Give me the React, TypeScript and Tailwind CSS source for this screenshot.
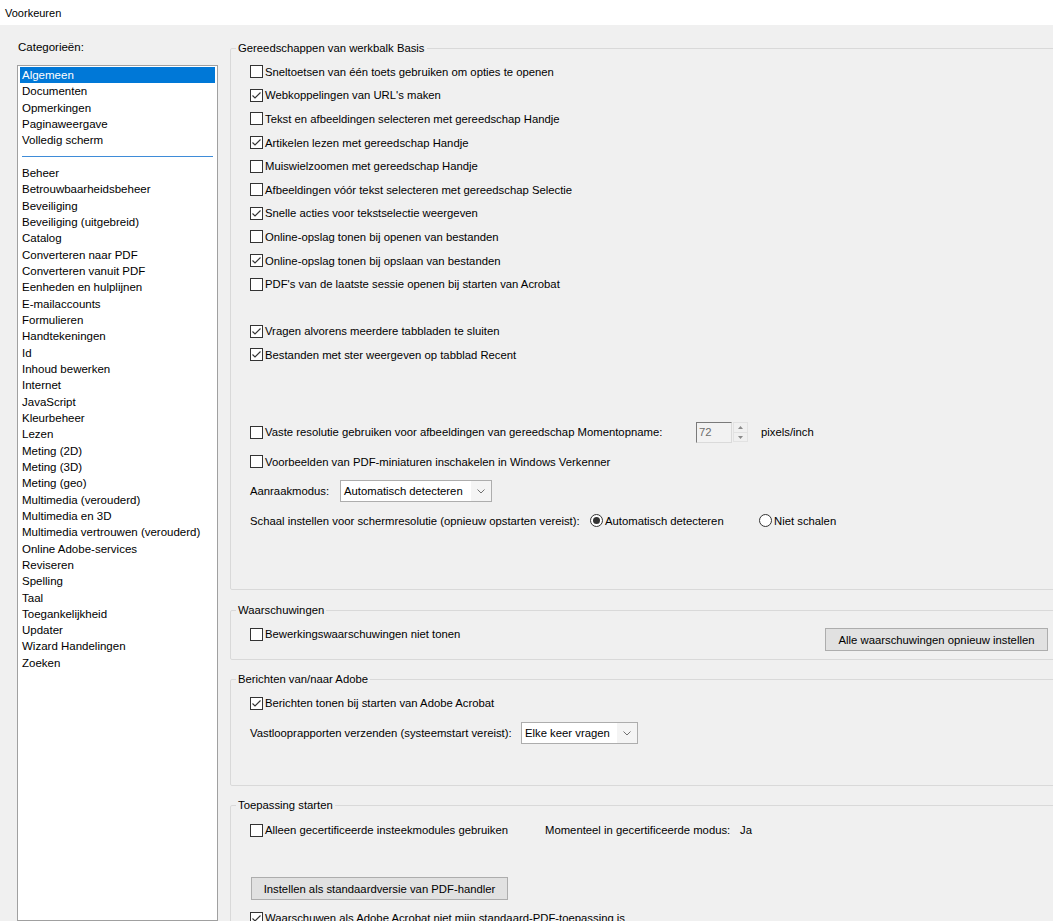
import React from 'react';

const topCategories = ['Algemeen', 'Documenten', 'Opmerkingen', 'Paginaweergave', 'Volledig scherm'];

const categories = [
  'Beheer', 'Betrouwbaarheidsbeheer', 'Beveiliging', 'Beveiliging (uitgebreid)', 'Catalog',
  'Converteren naar PDF', 'Converteren vanuit PDF', 'Eenheden en hulplijnen', 'E-mailaccounts',
  'Formulieren', 'Handtekeningen', 'Id', 'Inhoud bewerken', 'Internet', 'JavaScript',
  'Kleurbeheer', 'Lezen', 'Meting (2D)', 'Meting (3D)', 'Meting (geo)', 'Multimedia (verouderd)',
  'Multimedia en 3D', 'Multimedia vertrouwen (verouderd)', 'Online Adobe-services', 'Reviseren',
  'Spelling', 'Taal', 'Toegankelijkheid', 'Updater', 'Wizard Handelingen', 'Zoeken',
];

const toolOptions: [string, boolean][] = [
  ['Sneltoetsen van één toets gebruiken om opties te openen', false],
  ["Webkoppelingen van URL's maken", true],
  ['Tekst en afbeeldingen selecteren met gereedschap Handje', false],
  ['Artikelen lezen met gereedschap Handje', true],
  ['Muiswielzoomen met gereedschap Handje', false],
  ['Afbeeldingen vóór tekst selecteren met gereedschap Selectie', false],
  ['Snelle acties voor tekstselectie weergeven', true],
  ['Online-opslag tonen bij openen van bestanden', false],
  ['Online-opslag tonen bij opslaan van bestanden', true],
  ["PDF's van de laatste sessie openen bij starten van Acrobat", false],
];

function Box({ checked }: { checked?: boolean }) {
  return (
    <span className="w-[13px] h-[13px] shrink-0 border border-[#333333] bg-white flex items-center justify-center">
      {checked && (
        <svg width="11" height="11" viewBox="0 0 11 11">
          <polyline points="1.5,5.5 4,8 9.5,2.5" fill="none" stroke="#333333" strokeWidth="1.1" />
        </svg>
      )}
    </span>
  );
}

function Check({ label, checked, className = 'h-[23.6px]' }: { label: string; checked?: boolean; className?: string }) {
  return (
    <div className={`flex items-center gap-[2px] whitespace-nowrap ${className}`}>
      <Box checked={checked} />
      <span>{label}</span>
    </div>
  );
}

function Radio({ label, selected }: { label: string; selected?: boolean }) {
  return (
    <div className="flex items-center gap-[2px] whitespace-nowrap">
      <span className="w-[13px] h-[13px] rounded-full border border-[#333333] bg-white flex items-center justify-center">
        {selected && <span className="w-[7px] h-[7px] rounded-full bg-[#333333]" />}
      </span>
      <span>{label}</span>
    </div>
  );
}

function Select({ value, width }: { value: string; width: string }) {
  return (
    <div className={`${width} h-[22px] border border-[#adadad] bg-white flex items-center`}>
      <span className="flex-1 pl-[3px] whitespace-nowrap">{value}</span>
      <span className="w-[20px] h-full bg-[#f4f4f4] flex items-center justify-center">
        <svg width="8" height="5" viewBox="0 0 8 5">
          <polyline points="0.5,0.5 4,4 7.5,0.5" fill="none" stroke="#707070" strokeWidth="1" />
        </svg>
      </span>
    </div>
  );
}

function Group({ title, className, children }: { title: string; className: string; children: React.ReactNode }) {
  return (
    <div className={`relative w-[835px] shrink-0 border border-[#d9d9d9] rounded-[2px] ${className}`}>
      <span className="absolute -top-[8px] left-[5px] px-[2px] bg-[#f0f0f0] leading-[14px] whitespace-nowrap">{title}</span>
      {children}
    </div>
  );
}

export default function App() {
  return (
    <div className="w-[1053px] h-[921px] overflow-hidden bg-[#f0f0f0] text-black text-[11.3px] leading-[14px] font-['Liberation_Sans',Arial,sans-serif]">
      {/* title bar */}
      <div className="h-[25px] bg-white flex items-center pl-[5px] text-[11px]">Voorkeuren</div>

      <div className="flex h-[896px]">
        {/* categories */}
        <div className="w-[230px] shrink-0 pl-[17px] pr-[12px] pt-[15px] flex flex-col">
          <div className="h-[14px] pl-[1px] text-[11.5px]">Categorieën:</div>
          <div className="mt-[11px] flex-1 bg-white border border-[#a0a0a0] pt-[1px] px-[2px] text-[11.5px]">
            {topCategories.map((c, i) => (
              <div
                key={c}
                className={`h-[16.33px] leading-[16.33px] pl-[2px] whitespace-nowrap ${i === 0 ? 'bg-[#0078d7] text-white' : ''}`}
              >
                {c}
              </div>
            ))}
            <div className="h-[16.33px] flex items-center px-[2px]">
              <div className="w-full h-px bg-[#3f8cd8]" />
            </div>
            {categories.map((c) => (
              <div key={c} className="h-[16.33px] leading-[16.33px] pl-[2px] whitespace-nowrap">
                {c}
              </div>
            ))}
          </div>
        </div>

        {/* settings */}
        <div className="flex-1 min-w-0 flex flex-col overflow-hidden">
          <Group title="Gereedschappen van werkbalk Basis" className="mt-[23px] h-[542px]">
            <div className="pl-[19px] pt-[11px] flex flex-col">
              {toolOptions.map(([label, checked]) => (
                <Check key={label} label={label} checked={checked} />
              ))}
              <div className="h-[23.6px]" />
              <Check label="Vragen alvorens meerdere tabbladen te sluiten" checked />
              <Check label="Bestanden met ster weergeven op tabblad Recent" checked />
              <div className="h-[51px]" />
              <div className="flex items-center h-[29.5px]">
                <Check className="w-[446px]" label="Vaste resolutie gebruiken voor afbeeldingen van gereedschap Momentopname:" />
                <div className="w-[36px] h-[21px] border-t border-l border-t-[#7a7a7a] border-l-[#7a7a7a] border-r border-b border-r-[#dadada] border-b-[#dadada] bg-[#f2f2f2] text-[#6d6d6d] pl-[2px] leading-[19px]">
                  72
                </div>
                <div className="ml-[1px] w-[15px] h-[20px] border border-[#e2e2e2] bg-[#f0f0f0] flex flex-col">
                  <div className="flex-1 flex items-center justify-center border-b border-[#e2e2e2]">
                    <svg width="5" height="3" viewBox="0 0 5 3"><polygon points="0,3 2.5,0 5,3" fill="#8a8a8a" /></svg>
                  </div>
                  <div className="flex-1 flex items-center justify-center">
                    <svg width="5" height="3" viewBox="0 0 5 3"><polygon points="0,0 2.5,3 5,0" fill="#8a8a8a" /></svg>
                  </div>
                </div>
                <span className="ml-[13px]">pixels/inch</span>
              </div>
              <Check className="h-[29.5px]" label="Voorbeelden van PDF-miniaturen inschakelen in Windows Verkenner" />
              <div className="flex items-center h-[29.5px]">
                <span className="w-[90px]">Aanraakmodus:</span>
                <Select value="Automatisch detecteren" width="w-[152px]" />
              </div>
              <div className="flex items-center h-[29.5px]">
                <span className="w-[340px] whitespace-nowrap">Schaal instellen voor schermresolutie (opnieuw opstarten vereist):</span>
                <div className="w-[169px]">
                  <Radio label="Automatisch detecteren" selected />
                </div>
                <Radio label="Niet schalen" />
              </div>
            </div>
          </Group>

          <Group title="Waarschuwingen" className="mt-[20px] h-[50px]">
            <div className="pl-[19px] pt-[11px] flex items-start">
              <Check className="h-[24px] w-[575px]" label="Bewerkingswaarschuwingen niet tonen" />
              <button className="mt-[6px] w-[223px] h-[23px] border border-[#adadad] bg-[#e1e1e1] text-center whitespace-nowrap">
                Alle waarschuwingen opnieuw instellen
              </button>
            </div>
          </Group>

          <Group title="Berichten van/naar Adobe" className="mt-[19px] h-[107px]">
            <div className="pl-[19px] pt-[11px] flex flex-col">
              <Check className="h-[24px]" label="Berichten tonen bij starten van Adobe Acrobat" checked />
              <div className="mt-[6px] h-[24px] flex items-center">
                <span className="w-[271px] whitespace-nowrap">Vastlooprapporten verzenden (systeemstart vereist):</span>
                <Select value="Elke keer vragen" width="w-[117px]" />
              </div>
            </div>
          </Group>

          <Group title="Toepassing starten" className="mt-[19px] h-[200px]">
            <div className="pl-[19px] pt-[12px] flex flex-col">
              <div className="h-[24px] flex items-center">
                <Check className="w-[295px]" label="Alleen gecertificeerde insteekmodules gebruiken" />
                <span className="w-[195px] whitespace-nowrap">Momenteel in gecertificeerde modus:</span>
                <span>Ja</span>
              </div>
              <button className="mt-[35px] ml-[1px] w-[257px] h-[23px] border border-[#adadad] bg-[#e1e1e1] text-center whitespace-nowrap">
                Instellen als standaardversie van PDF-handler
              </button>
              <Check className="mt-[6px] h-[24px]" label="Waarschuwen als Adobe Acrobat niet mijn standaard-PDF-toepassing is" checked />
            </div>
          </Group>
        </div>
      </div>
    </div>
  );
}
